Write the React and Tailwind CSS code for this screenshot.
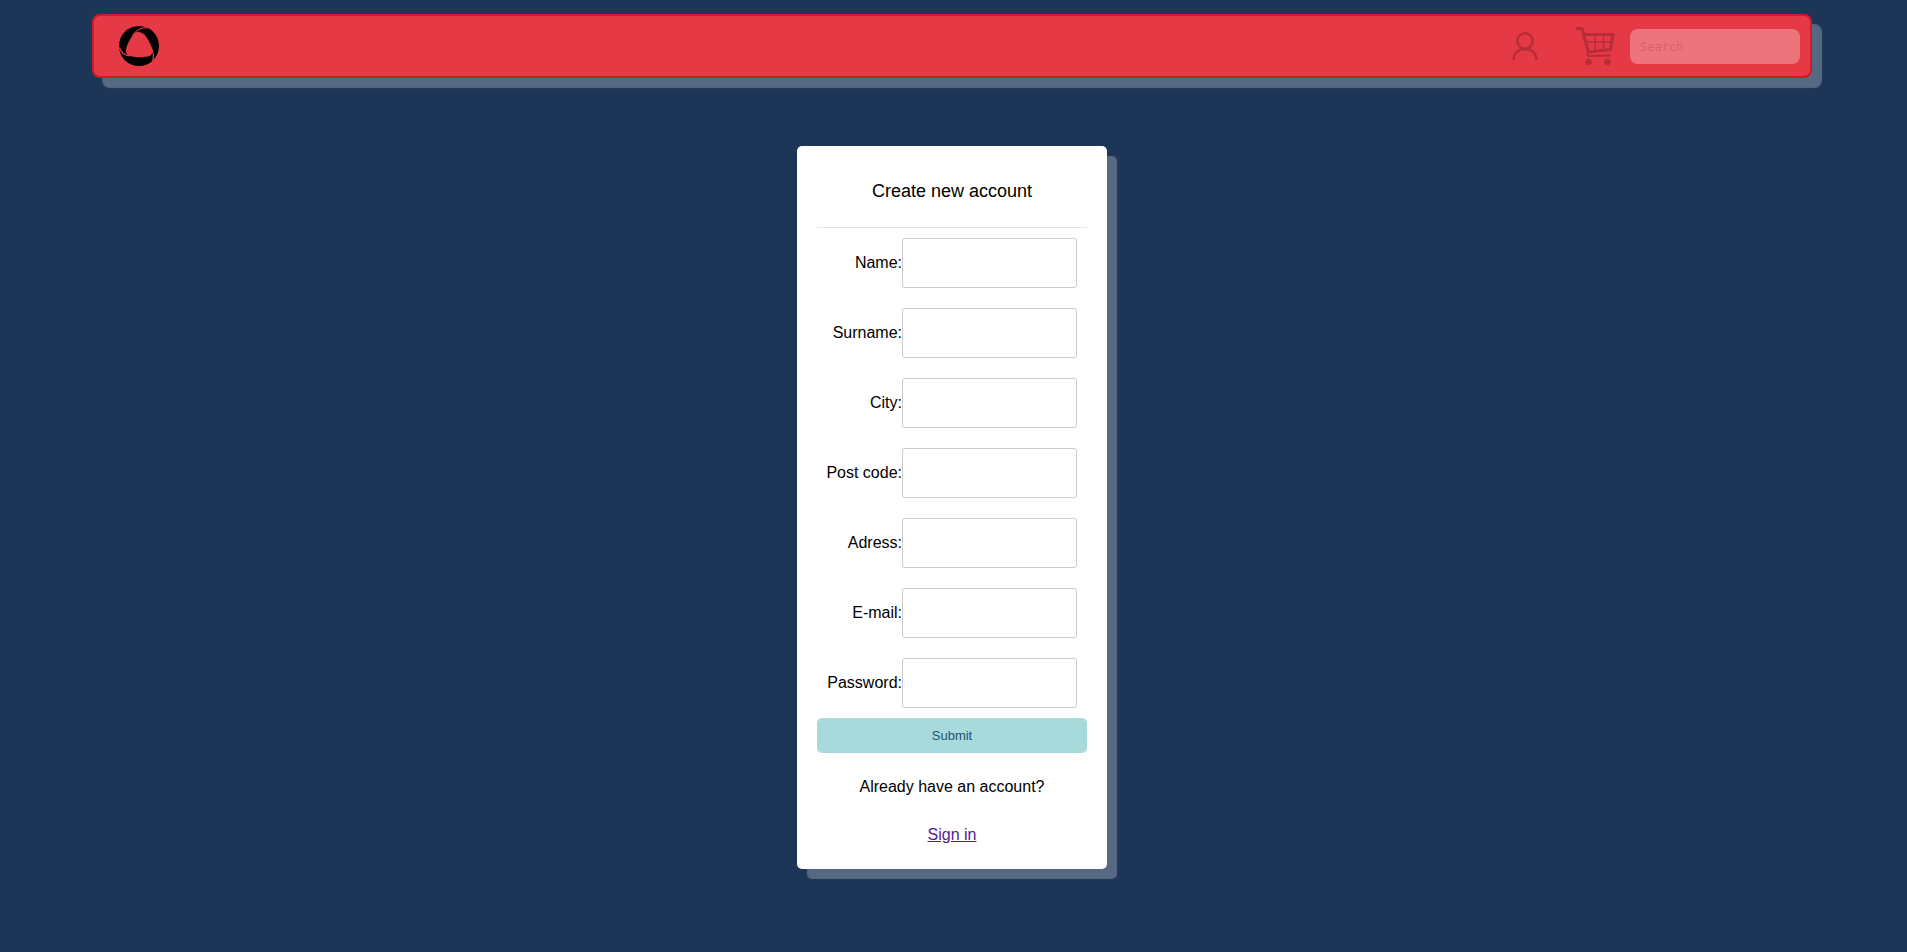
import React from "react";

const fields = [
  { id: "name", label: "Name:", type: "text" },
  { id: "surname", label: "Surname:", type: "text" },
  { id: "city", label: "City:", type: "text" },
  { id: "postcode", label: "Post code:", type: "text" },
  { id: "adress", label: "Adress:", type: "text" },
  { id: "email", label: "E-mail:", type: "email" },
  { id: "password", label: "Password:", type: "password" },
];

function Logo() {
  return (
    <svg viewBox="0 0 40 40" className="size-10" aria-hidden="true">
      <circle cx="20" cy="20" r="20" fill="#000" />
      <path
        d="M16.500 6.500C20.500 5.300 24.500 7 27 10.500C29.500 14 31.500 18 33 22C34 26.500 33 29.800 28.500 30.600C22 31.800 14.500 31.500 9.500 29.500C6.800 28 6.500 25 7.500 21.500C8.500 18 10.500 14 12.500 11C13.800 9 15 7.500 16.500 6.500Z"
        fill="#e63946"
      />
      <g fill="none" stroke="#e63946" strokeWidth="1.200">
        <path d="M14 9C17.500 3.500 22 1.300 28 1.800" />
        <path d="M32.800 23C35 28 34.800 32 33.500 35.500" />
        <path d="M10.500 29.800C5 29 1.500 26 0.500 21.500" />
      </g>
    </svg>
  );
}

function UserIcon() {
  return (
    <svg viewBox="0 0 26 28" className="h-7 w-[26px]" fill="none" stroke="#000" strokeWidth="2.500" aria-hidden="true">
      <circle cx="13" cy="9" r="7.700" />
      <path d="M1.600 28C1.600 21 6.500 16.900 13 16.900S24.400 21 24.400 28" />
    </svg>
  );
}

function CartIcon() {
  return (
    <svg viewBox="0 0 40 40" className="size-10" fill="none" stroke="#000" strokeLinecap="round" strokeLinejoin="round" aria-hidden="true">
      <path d="M2 2.500H7L13.500 26L35.500 23.500L38 8.500H9" strokeWidth="3.200" />
      <path d="M13.500 26C11.500 28 12 30 14 30L35 29.500" strokeWidth="2.200" />
      <path d="M20 9V25M28.500 9V24M11 16H36" strokeWidth="1.500" />
      <circle cx="13.500" cy="36" r="3.300" fill="#000" stroke="none" />
      <circle cx="32.500" cy="36" r="3.300" fill="#000" stroke="none" />
    </svg>
  );
}

export default function App() {
  return (
    <div className="flex min-h-screen flex-col bg-[#1d3557] pr-[95px] pl-[92px] pt-3.5 pb-10 font-['Liberation_Sans',Arial,sans-serif] text-base text-black">
      <header className="flex h-16 items-center justify-between rounded-lg border-2 border-[#c81d2a] bg-[#e63946] pr-2.5 pl-[25px] shadow-[10px_10px_1px_rgba(255,255,255,0.26)]">
        <a href="#home" aria-label="Home">
          <Logo />
        </a>
        <div className="flex items-center">
          <a href="#account" aria-label="Account" className="mr-[37px] opacity-20">
            <UserIcon />
          </a>
          <a href="#cart" aria-label="Cart" className="mr-[15px] opacity-20">
            <CartIcon />
          </a>
          <input
            type="search"
            aria-label="Search"
            placeholder="Search"
            className="h-[35px] w-[170px] rounded-lg bg-white/30 px-2.5 pt-0.5 font-['DejaVu_Sans_Mono',monospace] text-xs outline-none placeholder:text-[#d9606b]"
          />
        </div>
      </header>

      <main className="mt-17 flex justify-center">
        <form className="flex w-[310px] flex-col rounded-[5px] bg-white px-5 pb-6 shadow-[10px_10px_1px_rgba(255,255,255,0.26)]">
          <h1 className="border-b border-[#e5e5e5] pt-[33px] pb-6 text-center text-lg leading-6">Create new account</h1>
          <div className="flex flex-col gap-5 px-2.5 py-2.5">
            {fields.map((f) => (
              <div key={f.id} className="flex items-center justify-end">
                <label htmlFor={f.id} className="whitespace-nowrap">
                  {f.label}
                </label>
                <input
                  id={f.id}
                  type={f.type}
                  className="h-[50px] w-[175px] shrink-0 rounded-[3px] border border-[#ccc] bg-white px-3 outline-none"
                />
              </div>
            ))}
          </div>
          <button type="submit" className="h-[35px] rounded-[5px] bg-[#a8dadc] text-[13px] text-[#1d5375]">
            Submit
          </button>
          <p className="mt-6 text-center leading-5">Already have an account?</p>
          <a href="#signin" className="mt-7 self-center leading-5 text-[#551a8b] underline">
            Sign in
          </a>
        </form>
      </main>
    </div>
  );
}
